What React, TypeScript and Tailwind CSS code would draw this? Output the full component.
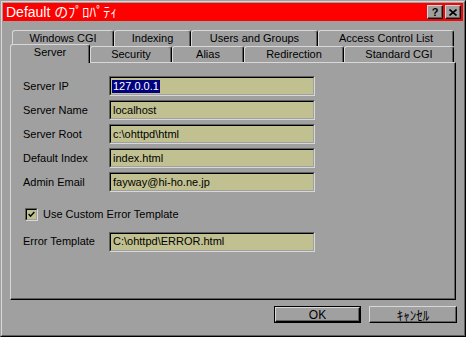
const FONT = "font-['Liberation_Sans','Noto_Sans_CJK_JP',sans-serif]";

const ROW1 = [
  { label: "Windows CGI", w: "w-[102px]" },
  { label: "Indexing", w: "w-[77px]" },
  { label: "Users and Groups", w: "w-[127px]" },
  { label: "Access Control List", w: "w-[136px]" },
];

const ROW2 = [
  { label: "Server", w: "w-[80px]", selected: true },
  { label: "Security", w: "w-[82px]" },
  { label: "Alias", w: "w-[72px]" },
  { label: "Redirection", w: "w-[100px]" },
  { label: "Standard CGI", w: "w-[110px]" },
];

const FIELDS = [
  { label: "Server IP", value: "127.0.0.1", selected: true },
  { label: "Server Name", value: "localhost" },
  { label: "Server Root", value: "c:\\ohttpd\\html" },
  { label: "Default Index", value: "index.html" },
  { label: "Admin Email", value: "fayway@hi-ho.ne.jp" },
];

function Tab({ label, w, selected }: { label: string; w: string; selected?: boolean }) {
  return (
    <div
      className={`${w} ${
        selected ? "-mt-[2px] h-[19px] relative z-10 pb-[3px]" : "h-[16px]"
      } shrink-0 flex items-center justify-center bg-[#a0a0a0] border-l border-t border-r border-l-[#d8d8d8] border-t-[#d8d8d8] border-r-black rounded-t-[3px] shadow-[inset_-1px_0_0_#606060] text-[11px] text-black leading-none`}
    >
      {label}
    </div>
  );
}

function Sunken({ className, children }: { className: string; children?: React.ReactNode }) {
  return (
    <div className={`${className} border border-t-[#606060] border-l-[#606060] border-b-[#d8d8d8] border-r-[#d8d8d8]`}>
      <div className="h-full border border-t-black border-l-black border-b-[#a0a0a0] border-r-[#a0a0a0] bg-[#c0c090] flex items-center">
        {children}
      </div>
    </div>
  );
}

function Field({ label, value, selected }: { label: string; value: string; selected?: boolean }) {
  return (
    <div className="flex items-center">
      <span className="w-[86px] text-[11px] text-black">{label}</span>
      <Sunken className="w-[206px] h-[20px]">
        <span
          className={`ml-[1px] px-[1px] text-[11px] leading-[13px] ${
            selected ? "bg-[#000080] text-white" : "text-black"
          }`}
        >
          {value}
        </span>
      </Sunken>
    </div>
  );
}

function Button({ children, isDefault, w }: { children: React.ReactNode; isDefault?: boolean; w: string }) {
  return (
    <div className={`${w} h-[17px] ${isDefault ? "border border-black" : ""}`}>
      <div className="h-full border border-t-[#d8d8d8] border-l-[#d8d8d8] border-b-black border-r-black">
        <div className="h-full flex items-center justify-center shadow-[inset_-1px_-1px_0_#606060] text-[12px] text-black leading-none">
          {children}
        </div>
      </div>
    </div>
  );
}

function CaptionButton({ children }: { children: React.ReactNode }) {
  return (
    <div className="w-[16px] h-[14px] bg-[#a0a0a0] border border-t-[#d8d8d8] border-l-[#d8d8d8] border-b-black border-r-black">
      <div className="h-full flex items-center justify-center shadow-[inset_-1px_-1px_0_#606060]">{children}</div>
    </div>
  );
}

export default function App() {
  return (
    <div className={`w-[466px] h-[337px] bg-[#a0a0a0] border border-t-[#a0a0a0] border-l-[#a0a0a0] border-b-black border-r-black ${FONT}`}>
      <div className="h-full border border-t-[#d8d8d8] border-l-[#d8d8d8] border-b-[#606060] border-r-[#606060] p-[1px] flex flex-col">
        {/* Title bar */}
        <div className="h-[18px] bg-[#ff0000] flex items-center justify-between pl-[3px] pr-[2px]">
          <span className="text-white text-[14px] leading-none">Default のﾌﾟﾛﾊﾟﾃｨ</span>
          <div className="flex gap-[2px]">
            <CaptionButton>
              <span className="text-[11px] font-bold leading-none text-black">?</span>
            </CaptionButton>
            <CaptionButton>
              <svg width="8" height="7" viewBox="0 0 8 7">
                <path d="M0.5 0.5 L7.5 6.5 M7.5 0.5 L0.5 6.5" stroke="black" strokeWidth="1.6" />
              </svg>
            </CaptionButton>
          </div>
        </div>

        {/* Tabs */}
        <div className="mt-[9px] ml-[7px] flex flex-col">
          <div className="flex ml-[2px]">
            {ROW1.map((t) => (
              <Tab key={t.label} {...t} />
            ))}
          </div>
          <div className="flex h-[16px] items-start">
            {ROW2.map((t) => (
              <Tab key={t.label} {...t} />
            ))}
          </div>
        </div>

        {/* Panel */}
        <div className="ml-[7px] w-[446px] h-[238px] border border-t-[#d8d8d8] border-l-[#d8d8d8] border-b-black border-r-black">
          <div className="h-full shadow-[inset_-1px_-1px_0_#606060] pt-[13px] pl-[12px] flex flex-col">
            <div className="flex flex-col gap-[4px]">
              {FIELDS.map((f) => (
                <Field key={f.label} {...f} />
              ))}
            </div>
            <div className="mt-[14px] ml-[2px] flex items-center gap-[5px]">
              <Sunken className="w-[13px] h-[13px]">
                <svg width="11" height="11" viewBox="0 0 11 11">
                  <path d="M2 5 L4.3 7.5 L9 2.5" fill="none" stroke="black" strokeWidth="1.8" />
                </svg>
              </Sunken>
              <span className="text-[11px] text-black">Use Custom Error Template</span>
            </div>
            <div className="mt-[9px]">
              <Field label="Error Template" value="C:\ohttpd\ERROR.html" />
            </div>
          </div>
        </div>

        {/* Buttons */}
        <div className="mt-[6px] flex justify-end gap-[8px] pr-[6px]">
          <Button w="w-[87px]" isDefault>
            OK
          </Button>
          <Button w="w-[88px]">
            <span className="text-[13px] font-['Noto_Sans_CJK_JP',sans-serif]">ｷｬﾝｾﾙ</span>
          </Button>
        </div>
      </div>
    </div>
  );
}
